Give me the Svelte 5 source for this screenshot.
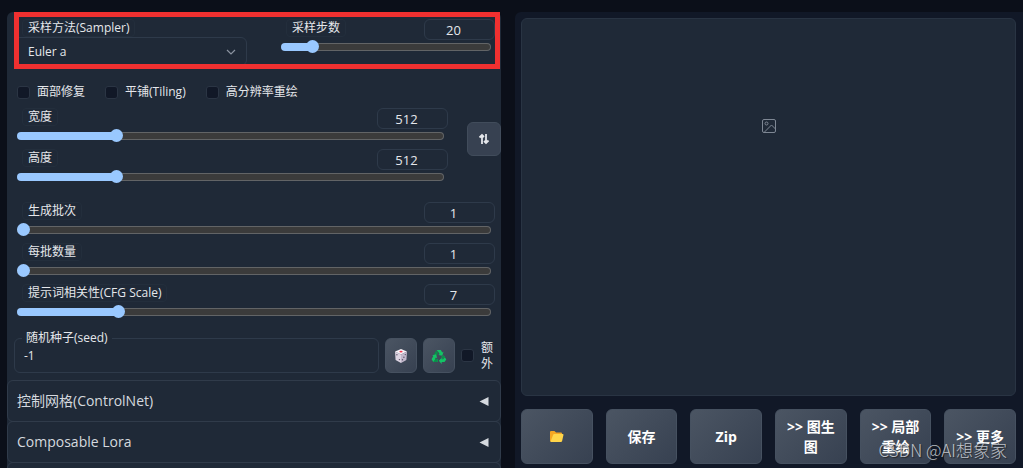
<script lang="ts">
  type Slider = { id: string; label: string; min: number; max: number; value: number };

  let sampler = $state("Euler a");
  let seed = $state("-1");
  let steps: Slider = $state({ id: "steps", label: "采样步数", min: 1, max: 150, value: 20 });
  let size: Slider[] = $state([
    { id: "width", label: "宽度", min: 64, max: 2048, value: 512 },
    { id: "height", label: "高度", min: 64, max: 2048, value: 512 },
  ]);
  let batch: Slider[] = $state([
    { id: "batch-count", label: "生成批次", min: 1, max: 100, value: 1 },
    { id: "batch-size", label: "每批数量", min: 1, max: 8, value: 1 },
    { id: "cfg", label: "提示词相关性(CFG Scale)", min: 1, max: 30, value: 7 },
  ]);

  const toggles = ["面部修复", "平铺(Tiling)", "高分辨率重绘"];
  const accordions = ["控制网格(ControlNet)", "Composable Lora"];
  const sendButtons = ["保存", "Zip", ">> 图生图", ">> 局部重绘", ">> 更多"];

  function fill(s: Slider) {
    return ((s.value - s.min) / (s.max - s.min)) * 100;
  }

  function swapSize() {
    const w = size[0].value;
    size[0].value = size[1].value;
    size[1].value = w;
  }
</script>

{#snippet slider(s: Slider)}
  <div class="slider">
    <div class="sliderHead">
      <label class="tag" for={s.id}>{s.label}</label>
      <input class="number" type="number" aria-label={s.label} min={s.min} max={s.max} bind:value={s.value} />
    </div>
    <input
      class="range"
      type="range"
      id={s.id}
      min={s.min}
      max={s.max}
      bind:value={s.value}
      style="--fill: {fill(s)}%"
    />
  </div>
{/snippet}

<main>
  <section class="settings">
    <div class="samplerRow">
      <div class="samplerField">
        <label class="tag" for="sampler">采样方法(Sampler)</label>
        <div class="selectWrap">
          <select id="sampler" bind:value={sampler}>
            <option>Euler a</option>
            <option>Euler</option>
            <option>DDIM</option>
          </select>
          <svg class="chevron" viewBox="0 0 10 6" aria-hidden="true">
            <path d="M1 1l4 4 4-4" fill="none" stroke="currentColor" stroke-width="1.2" />
          </svg>
        </div>
      </div>
      {@render slider(steps)}
      <div class="highlight"></div>
    </div>

    <div class="toggles">
      {#each toggles as name}
        <label><input type="checkbox" />{name}</label>
      {/each}
    </div>

    <div class="sizeRow">
      <div class="sliders">
        {#each size as s}
          {@render slider(s)}
        {/each}
      </div>
      <button class="swap" aria-label="Swap" onclick={swapSize}>
        <svg viewBox="0 0 12 12" aria-hidden="true">
          <path d="M4 11V2M1.5 4.5L4 2l2 2M8 1v9M6 8l2 2 2.5-2.5" fill="none" stroke="currentColor" stroke-width="1.8" />
        </svg>
      </button>
    </div>

    <div class="sliders batch">
      {#each batch as s}
        {@render slider(s)}
      {/each}
    </div>

    <div class="seedRow">
      <div class="seed">
        <label for="seed">随机种子(seed)</label>
        <input id="seed" type="text" bind:value={seed} />
      </div>
      <button class="tool" aria-label="Random seed" onclick={() => (seed = "-1")}>
        <svg viewBox="0 0 16 16" aria-hidden="true">
          <path d="M8 1l6 2.6L8 6.6 2 3.6z" fill="#f6f1f7" />
          <path d="M2 3.6l6 3V15l-5.4-3.1z" fill="#dcd4e2" />
          <path d="M14 3.6l-6 3V15l5.4-3.1z" fill="#c3b9cc" />
          <ellipse cx="8" cy="3.6" rx="1.6" ry="0.9" fill="#f0384e" />
          <g fill="#5a4e66">
            <circle cx="3.9" cy="6.8" r="0.7" />
            <circle cx="6.4" cy="11.6" r="0.7" />
            <circle cx="12.3" cy="6.6" r="0.7" />
            <circle cx="10.9" cy="9.2" r="0.7" />
            <circle cx="9.5" cy="11.8" r="0.7" />
          </g>
        </svg>
      </button>
      <button class="tool" aria-label="Reuse seed">
        <svg viewBox="0 0 16 16" aria-hidden="true">
          <path d="M5.6 2h4.2l1.5 2.5 1.2-.7-1.2 4-4-.9 1.3-.8L7.7 4.5z" fill="#13c465" />
          <path d="M5.2 2.4L7.3 4.9 5.7 7.6 3.1 6z" fill="#0a8f4a" />
          <path d="M1.2 7.2l3.9-.9 1.1 3.9-1.3-.8-.9 1.7h2.6v3H2.3L.6 11.3l1.7-3.4z" fill="#13c465" />
          <path d="M12.7 7.6l2.6 4-1.8 2.5h-2.8V16l-2.9-3.3 2.9-3v1.5h1.5l-1.9-2.2z" fill="#13c465" />
          <path d="M2.2 14.1l2-3h2.4v3z" fill="#0a8f4a" />
          <path d="M12.7 7.6l1.3 2-1.8 1.6-1.9-2.2z" fill="#0a8f4a" />
        </svg>
      </button>
      <label class="extra"><input type="checkbox" /><span>额外</span></label>
    </div>

    {#each accordions as title}
      <button class="accordion">
        <span>{title}</span>
        <svg viewBox="0 0 10 10" aria-hidden="true"><path d="M0 5l10-5v10z" fill="currentColor" /></svg>
      </button>
    {/each}
    <div class="accordion"></div>
  </section>

  <section class="output">
    <div class="gallery">
      <svg viewBox="0 0 16 16" aria-hidden="true" fill="none" stroke="currentColor">
        <rect x="1.5" y="1.5" width="13" height="13" rx="1.5" />
        <circle cx="5.5" cy="5.5" r="1.5" />
        <path d="M3 14.5L10.5 7l4 4" />
      </svg>
    </div>
    <div class="actions">
      <button aria-label="Open folder">
        <svg viewBox="0 0 16 14" aria-hidden="true">
          <path d="M1 2.2Q1 1 2.2 1h3.6l1.7 1.8h5.3q1.2 0 1.2 1.2V12H1z" fill="#f5a623" />
          <path d="M4.4 5.2Q4.7 4.4 5.6 4.4h9.1q1 0 .8 1l-1.5 6.4q-.3 1.2-1.4 1.2H1.4z" fill="#ffd54a" />
        </svg>
      </button>
      {#each sendButtons as name}
        <button>{name}</button>
      {/each}
    </div>
  </section>
  <div class="watermark">CSDN @AI想象家</div>
</main>

<style>
  :global(body) {
    background: #0b0f19;
    overflow: hidden;
  }
  main {
    --line: #2e3a4a;
    --panel: #1f2937;
    --text: #e5e7eb;
    position: relative;
    display: grid;
    grid-template-columns: 494fr 508fr;
    grid-template-rows: minmax(0, 1fr);
    gap: 14px;
    box-sizing: border-box;
    height: 100vh;
    padding: 12px 0 0 7px;
    overflow: hidden;
    color: var(--text);
    font-family: "Open Sans", "Noto Sans CJK SC", sans-serif;
    font-size: 12px;
    line-height: 16px;
  }
  main :is(button, input, select) {
    box-sizing: border-box;
    margin: 0;
    color: inherit;
    font-family: inherit;
    font-size: inherit;
    line-height: inherit;
  }
  svg {
    display: block;
  }

  .settings {
    min-width: 0;
    background: var(--panel);
    border-radius: 6px 6px 0 0;
  }
  .samplerRow {
    position: relative;
    display: grid;
    grid-template-columns: 233fr 217fr;
    gap: 31px;
    padding: 7px 6px 3px 7px;
  }
  /* red frame lies over the whole row */
  .highlight {
    position: absolute;
    inset: 0 1px 0 7px;
    border: 5px solid #f03030;
    pointer-events: none;
  }
  .tag {
    margin-left: 8px;
    padding: 0 5px;
    border: 1px solid #232e3c;
    border-radius: 4px;
    background: var(--panel);
  }
  .samplerField {
    display: flex;
    flex-direction: column;
    align-items: flex-start;
  }
  .selectWrap {
    position: relative;
    width: 100%;
  }
  select {
    appearance: none;
    width: 100%;
    height: 29px;
    padding: 0 13px;
    background: transparent;
    border: 1px solid var(--line);
    border-radius: 6px;
  }
  .chevron {
    position: absolute;
    right: 11px;
    top: 12px;
    width: 10px;
    height: 6px;
    color: #8b93a0;
    pointer-events: none;
  }

  .sliderHead {
    display: flex;
    align-items: flex-start;
    justify-content: space-between;
  }
  .slider {
    display: flex;
    flex-direction: column;
  }
  .number {
    appearance: textfield;
    width: 71px;
    height: 21px;
    padding: 0 12px 0 0;
    text-align: center;
    background: transparent;
    border: 1px solid var(--line);
    border-radius: 6px;
  }
  main .number {
    font-size: 13px;
  }
  .number::-webkit-inner-spin-button {
    display: none;
  }
  main .range {
    appearance: none;
    height: 14px;
    margin: 0 4px 0 3px;
    background: transparent;
  }
  .range::-webkit-slider-runnable-track {
    box-sizing: border-box;
    height: 8px;
    border: 1px solid transparent;
    border-radius: 4px;
    background:
      linear-gradient(90deg, #99c8ff var(--fill), transparent var(--fill)) border-box,
      linear-gradient(#3b3b3b, #3b3b3b) padding-box,
      linear-gradient(#626466, #626466) border-box;
  }
  .range::-webkit-slider-thumb {
    appearance: none;
    width: 13px;
    height: 13px;
    margin-top: -4px;
    margin-left: -1px;
    border-radius: 50%;
    background: #99c8ff;
  }

  .toggles {
    display: flex;
    gap: 20px;
    padding: 15px 10px 8px;
  }
  .toggles label {
    display: flex;
    align-items: center;
    gap: 7px;
  }
  input[type="checkbox"] {
    appearance: none;
    flex: none;
    width: 13px;
    height: 13px;
    background: #111827;
    border: 1px solid #2b3544;
    border-radius: 3px;
  }
  input[type="checkbox"]:checked {
    background: #99c8ff;
  }

  .sliders {
    display: flex;
    flex-direction: column;
    flex: 1;
    gap: 6px;
  }
  .sizeRow {
    display: flex;
    align-items: center;
    gap: 19px;
    padding-left: 7px;
  }
  .swap {
    display: grid;
    place-items: center;
    width: 34px;
    height: 34px;
    padding: 0;
    background: #374151;
    border: 1px solid #414c5b;
    border-radius: 6px;
  }
  main .swap {
    margin-top: -14px;
  }
  .swap svg {
    width: 12px;
    height: 12px;
  }
  .batch {
    padding: 18px 6px 0 7px;
  }

  .seedRow {
    display: flex;
    align-items: center;
    gap: 6px;
    padding: 19px 6px 7px 7px;
  }
  .seed {
    position: relative;
    flex: 1;
  }
  .seed label {
    position: absolute;
    left: 8px;
    top: -8px;
    padding: 0 4px;
    background: var(--panel);
  }
  .seed input {
    display: block;
    width: 100%;
    height: 35px;
    padding: 0 9px;
    background: transparent;
    border: 1px solid var(--line);
    border-radius: 6px;
  }
  .tool {
    display: grid;
    place-items: center;
    width: 32px;
    height: 35px;
    padding: 0;
    background: linear-gradient(135deg, #4b5563, #374151);
    border: 1px solid #465160;
    border-radius: 6px;
  }
  .tool svg {
    width: 16px;
    height: 16px;
  }
  .extra {
    display: flex;
    align-items: center;
    gap: 7px;
  }
  .extra span {
    width: 14px;
  }

  .accordion {
    display: flex;
    align-items: center;
    justify-content: space-between;
    box-sizing: border-box;
    width: 100%;
    height: 42px;
    padding: 0 11px 0 9px;
    background: transparent;
    border: 1px solid #303b4a;
    border-radius: 6px;
  }
  main .accordion {
    margin-bottom: -1px;
    color: #d5d9df;
    font-size: 14px;
  }
  .accordion svg {
    width: 10px;
    height: 9px;
  }

  .output {
    display: flex;
    flex-direction: column;
    gap: 13px;
    min-width: 0;
    padding: 6px 7px 4px 6px;
    background: #111827;
    border-radius: 6px 0 0 0;
  }
  .gallery {
    flex: 1;
    padding-top: 99px;
    background: var(--panel);
    border: 1px solid #293443;
    border-radius: 6px;
  }
  .gallery svg {
    width: 16px;
    height: 16px;
    margin: 0 auto;
    color: #7e8794;
  }
  .actions {
    display: grid;
    grid-template-columns: repeat(6, 1fr);
    gap: 13px;
  }
  main .actions button {
    display: grid;
    place-items: center;
    height: 55px;
    padding: 0 8px;
    color: #fff;
    font-size: 14px;
    font-weight: 700;
    line-height: 20px;
    background: linear-gradient(135deg, #4b5563, #374151);
    border: 1px solid #465160;
    border-radius: 6px;
  }
  .actions svg {
    width: 15px;
    height: 13px;
  }
  .watermark {
    position: absolute;
    right: 16px;
    bottom: 6px;
    color: #d4d7dc;
    font-family: "Noto Sans CJK SC", sans-serif;
    font-size: 17px;
    font-weight: 300;
    line-height: 24px;
    text-shadow: 1px 1px 1px #222;
    opacity: 0.85;
    pointer-events: none;
  }
</style>
